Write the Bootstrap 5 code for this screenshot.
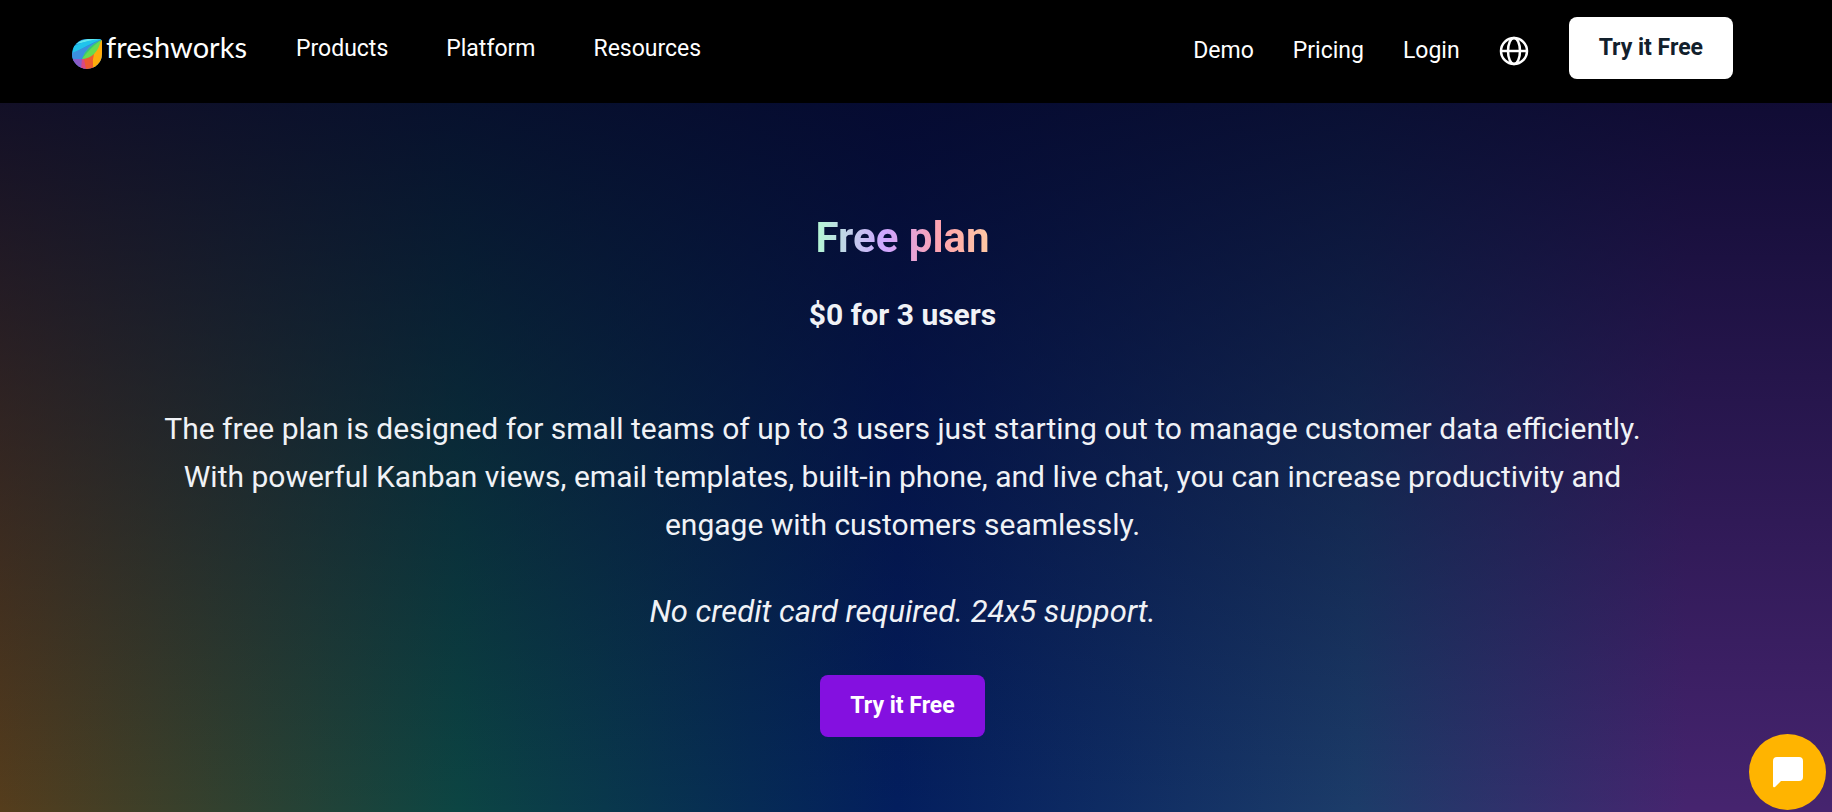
<!DOCTYPE html>
<html lang="en">
<head>
<meta charset="utf-8">
<meta name="viewport" content="width=device-width, initial-scale=1">
<title>Free plan | Freshworks</title>
<link href="https://cdn.jsdelivr.net/npm/bootstrap@5.3.0/dist/css/bootstrap.min.css" rel="stylesheet">
<style>
  body { font-family: Roboto, "Liberation Sans", sans-serif; background: #06092b; color: #f0f2f6; }
  .site-header { background: #000; min-height: 103px; padding: 17px 99px 24px 72px; }
  .brand-group { margin-top: 12px; }
  .brand-mark { margin-top: 10px; }
  .brand-word { font-family: Lato, sans-serif; font-size: 29px; line-height: 36px; color: #fff; }
  .site-header .nav-link { font-size: 23px; line-height: 32px; color: #fff; padding: 0; }
  .main-links { gap: 58px; margin-left: 49px; }
  .side-group { gap: 40px; }
  .side-links { gap: 39px; margin-top: 5px; }
  .cta { font-size: 23px; font-weight: 700; line-height: 30px; padding: 16px 30px; border: 0; border-radius: 8px; }
  .cta-light, .cta-light:hover { background: #fff; color: #12202c; }
  .cta-purple, .cta-purple:hover { background: #8410e0; color: #fff; }
  .hero {
    min-height: calc(100vh - 103px);
    padding: 106px 99px 75px 72px;
    background:
      linear-gradient(180deg, rgba(6,7,41,.84) 0%, rgba(6,7,41,0) 100%),
      linear-gradient(90deg, #553d1c 0%, #0c4543 25%, #031e5e 49%, #1c3c69 74%, #46246f 92%, #46246f 100%);
  }
  .plan-title {
    font-size: 42px; font-weight: 700; line-height: 58px; margin-bottom: 28px;
    background: linear-gradient(90deg, #b4f9d4 0%, #cfa5ff 40%, #ffa3ad 72%, #ffc9a3 100%);
    -webkit-background-clip: text; background-clip: text; color: transparent;
  }
  .plan-price { font-size: 30px; font-weight: 700; line-height: 40px; margin-bottom: 70px; }
  .plan-text { font-size: 30px; line-height: 48px; margin-bottom: 39px; max-width: 1500px; }
  .plan-note { font-size: 31px; }
  .chat-button { width: 77px; height: 76px; right: 6px; bottom: 2px; background: #ffb400; }
</style>
</head>
<body>
<header class="site-header d-flex align-items-start justify-content-between">
  <div class="brand-group d-flex align-items-start">
    <a href="#" class="d-flex align-items-start gap-1 text-decoration-none" aria-label="Freshworks home">
      <svg width="30" height="30" viewBox="0 0 30 30" class="brand-mark" aria-hidden="true">
        <defs><clipPath id="leaf"><path d="M15 0H27Q30 0 30 3V15A15 15 0 1 1 15 0Z"/></clipPath></defs>
        <g clip-path="url(#leaf)">
          <path fill="#2196dc" d="M0 0H30V30H0Z"/>
          <path fill="#62e8ee" d="M4 5Q12-2 30 0Q18 2 4 5Z"/>
          <path fill="#20c4ec" d="M2 7Q14 1 30 0Q14 6 0 16Z"/>
          <path fill="#3b8fdf" d="M0 14Q14 8 30 0Q14 12 9 20L0 22Z"/>
          <path fill="#8b5cc7" d="M0 20L10 20L13 30H0Z"/>
          <path fill="#d94884" d="M10 20L19 19L15 30H9Z"/>
          <path fill="#ee5a30" d="M12 20Q24 15 30 0Q24 20 22 30H14Z"/>
          <path fill="#ffac0b" d="M30 0Q19 15 21 28L30 30Z"/>
          <path fill="#66dc50" d="M29 1Q14 8 10 20Q25 19 29 1Z"/>
          <path fill="#35c579" d="M29 1Q14 8 10 20Q17 10 29 1Z"/>
        </g>
      </svg>
      <span class="brand-word">freshworks</span>
    </a>
    <nav class="nav main-links pt-1" aria-label="Main">
      <a class="nav-link" href="#">Products</a>
      <a class="nav-link" href="#">Platform</a>
      <a class="nav-link" href="#">Resources</a>
    </nav>
  </div>
  <div class="side-group d-flex align-items-center">
    <nav class="nav side-links align-items-center" aria-label="Account">
      <a class="nav-link" href="#">Demo</a>
      <a class="nav-link" href="#">Pricing</a>
      <a class="nav-link" href="#">Login</a>
      <a class="nav-link d-flex" href="#" aria-label="Language">
        <svg width="30" height="30" viewBox="0 0 30 30" fill="none" stroke="#fff" stroke-width="2.5" aria-hidden="true"><circle cx="15" cy="15" r="13"/><ellipse cx="15" cy="15" rx="6" ry="13"/><path d="M2 15H28"/></svg>
      </a>
    </nav>
    <button type="button" class="btn cta cta-light">Try it Free</button>
  </div>
</header>
<main class="hero d-flex flex-column align-items-center text-center">
  <h1 class="plan-title">Free plan</h1>
  <h2 class="plan-price">$0 for 3 users</h2>
  <p class="plan-text">The free plan is designed for small teams of up to 3 users just starting out to manage customer data efficiently. With powerful Kanban views, email templates, built-in phone, and live chat, you can increase productivity and engage with customers seamlessly.</p>
  <p class="plan-text plan-note fst-italic">No credit card required. 24x5 support.</p>
  <button type="button" class="btn cta cta-purple">Try it Free</button>
</main>
<button type="button" class="chat-button btn rounded-circle border-0 p-0 position-fixed d-flex align-items-center justify-content-center" aria-label="Open chat">
  <svg width="32" height="32" viewBox="0 0 32 32" fill="#fff" aria-hidden="true"><path d="M5 1H27Q31 1 31 5V21Q31 25 27 25H9L3 31Q1 32 1 30V5Q1 1 5 1Z"/></svg>
</button>
<script src="https://cdn.jsdelivr.net/npm/bootstrap@5.3.0/dist/js/bootstrap.bundle.min.js"></script>
</body>
</html>
